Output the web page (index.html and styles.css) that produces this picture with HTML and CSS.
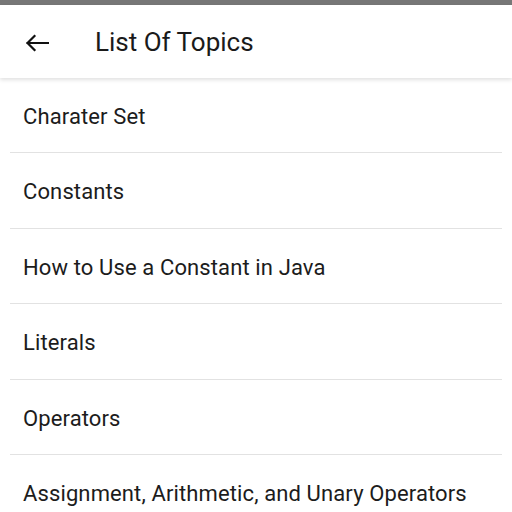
FILE: index.html
```html
<!DOCTYPE html>
<html>
<head>
<meta charset="utf-8">
<link rel="stylesheet" href="styles.css">
</head>
<body>
<div class="status"></div>
<header class="appbar">
  <svg class="back" width="24" height="18" viewBox="0 0 24 18"><path d="M2.5 9H23M2.5 9L9.5 2M2.5 9L9.5 16" fill="none" stroke="#111" stroke-width="2.2" stroke-linecap="square"/></svg>
  <h1 class="title">List Of Topics</h1>
</header>
<ul class="list">
  <li class="item">Charater Set</li>
  <li class="item">Constants</li>
  <li class="item">How to Use a Constant in Java</li>
  <li class="item">Literals</li>
  <li class="item">Operators</li>
  <li class="item">Assignment, Arithmetic, and Unary Operators</li>
</ul>
</body>
</html>
```
FILE: styles.css
```css
html, body { margin: 0; padding: 0; background: #fff; }
body { width: 512px; height: 512px; overflow: hidden; font-family: Roboto, "Noto Sans", sans-serif; color: #212121; }
.status { height: 5px; background: #777; }
.appbar {
  height: 73px; display: flex; align-items: center; background: #fff;
  box-shadow: 0 2px 4px rgba(0,0,0,0.12); position: relative; z-index: 1;
}
.back { margin-left: 25px; margin-right: 46px; margin-top: 2px; }
.title { margin: 0; font-size: 26px; font-weight: 400; color: #1a1a1a; }
.list { list-style: none; margin: 0; padding: 0 10px; }
.item {
  height: 75.5px; display: flex; align-items: center; padding-left: 13px; padding-top: 3px; box-sizing: border-box;
  font-size: 22px; letter-spacing: 0.12px; color: #1c1c1c; border-bottom: 1px solid #e2e2e2;
}
.item:first-child { height: 75px; }
```
